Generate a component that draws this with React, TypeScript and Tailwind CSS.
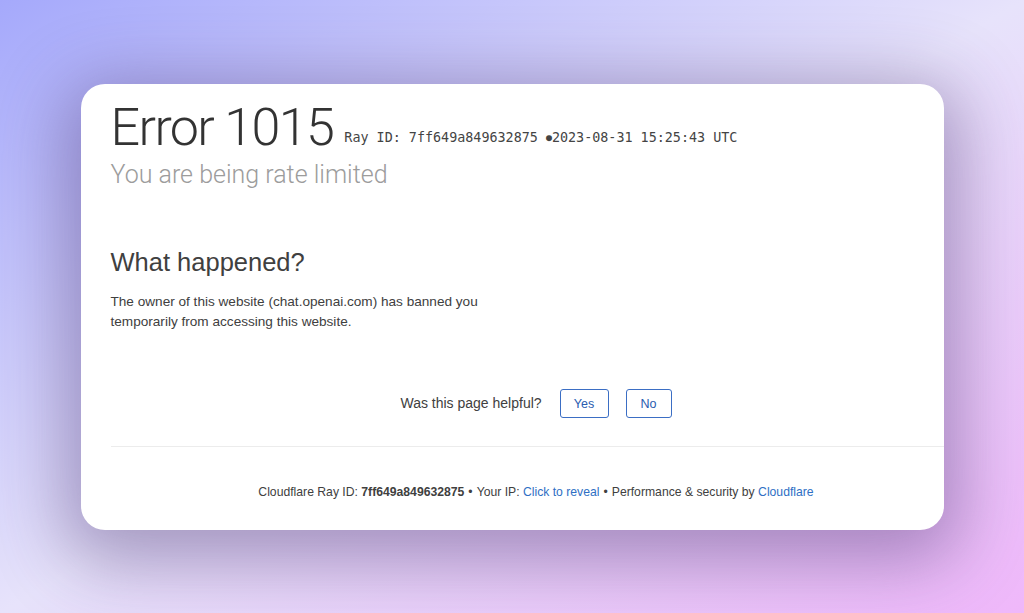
import React from "react";

export default function App() {
  return (
    <div className="w-full h-[613px] flex items-center justify-center bg-[linear-gradient(to_bottom_right,#a5a9fb_0%,#e7e3fb_50%,#efb7fa_100%)] overflow-hidden">
      <div className="w-[863px] h-[446px] bg-white rounded-[24px] overflow-hidden shadow-[0_16px_70px_16px_rgba(70,45,110,0.42)] font-['Liberation_Sans',Arial,sans-serif]">
        <div className="w-[881px] pl-[30px] pt-[13px]">
          <div className="flex items-baseline">
            <h1 className="font-['Roboto',sans-serif] text-[52px] leading-[1.2] font-light text-[#333333] tracking-[-1.6px]">Error 1015</h1>
            <span className="ml-[11px] relative -top-[3px] font-['DejaVu_Sans_Mono',monospace] text-[13.4px] text-[#444444]">
              Ray ID: 7ff649a849632875 <span className="text-[10px] relative -top-[1px]">●</span>2023-08-31 15:25:43 UTC
            </span>
          </div>
          <h2 className="font-['Roboto',sans-serif] font-light text-[25px] leading-[1.2] text-[#9c9c9c] mt-[1px]">You are being rate limited</h2>
          <h2 className="text-[25.5px] leading-[1.2] text-[#404040] mt-[57px]">What happened?</h2>
          <p className="text-[13.6px] leading-[20px] text-[#404040] mt-[15px] w-[390px]">
            The owner of this website (chat.openai.com) has banned you temporarily from accessing this website.
          </p>
          <div className="flex items-center justify-center mt-[57px] w-[851px]">
            <span className="text-[14px] text-[#404040] mr-[18px]">Was this page helpful?</span>
            <button className="w-[49px] h-[29px] border border-[#3b6ec4] rounded-[3px] text-[12.5px] text-[#2a5db0] mr-[17px] bg-white">Yes</button>
            <button className="w-[46px] h-[29px] border border-[#3b6ec4] rounded-[3px] text-[12.5px] text-[#2a5db0] bg-white">No</button>
          </div>
          <div className="h-px bg-[#ececec] mt-[28px] w-[851px]"></div>
          <div className="w-[851px] text-center text-[12.2px] text-[#404040] mt-[36px]">
            Cloudflare Ray ID: <strong className="font-bold">7ff649a849632875</strong>
            <span className="mx-[4px]">•</span>
            Your IP: <span className="text-[#2f6fc4]">Click to reveal</span>
            <span className="mx-[4px]">•</span>
            Performance &amp; security by <span className="text-[#2f6fc4]">Cloudflare</span>
          </div>
        </div>
      </div>
    </div>
  );
}
